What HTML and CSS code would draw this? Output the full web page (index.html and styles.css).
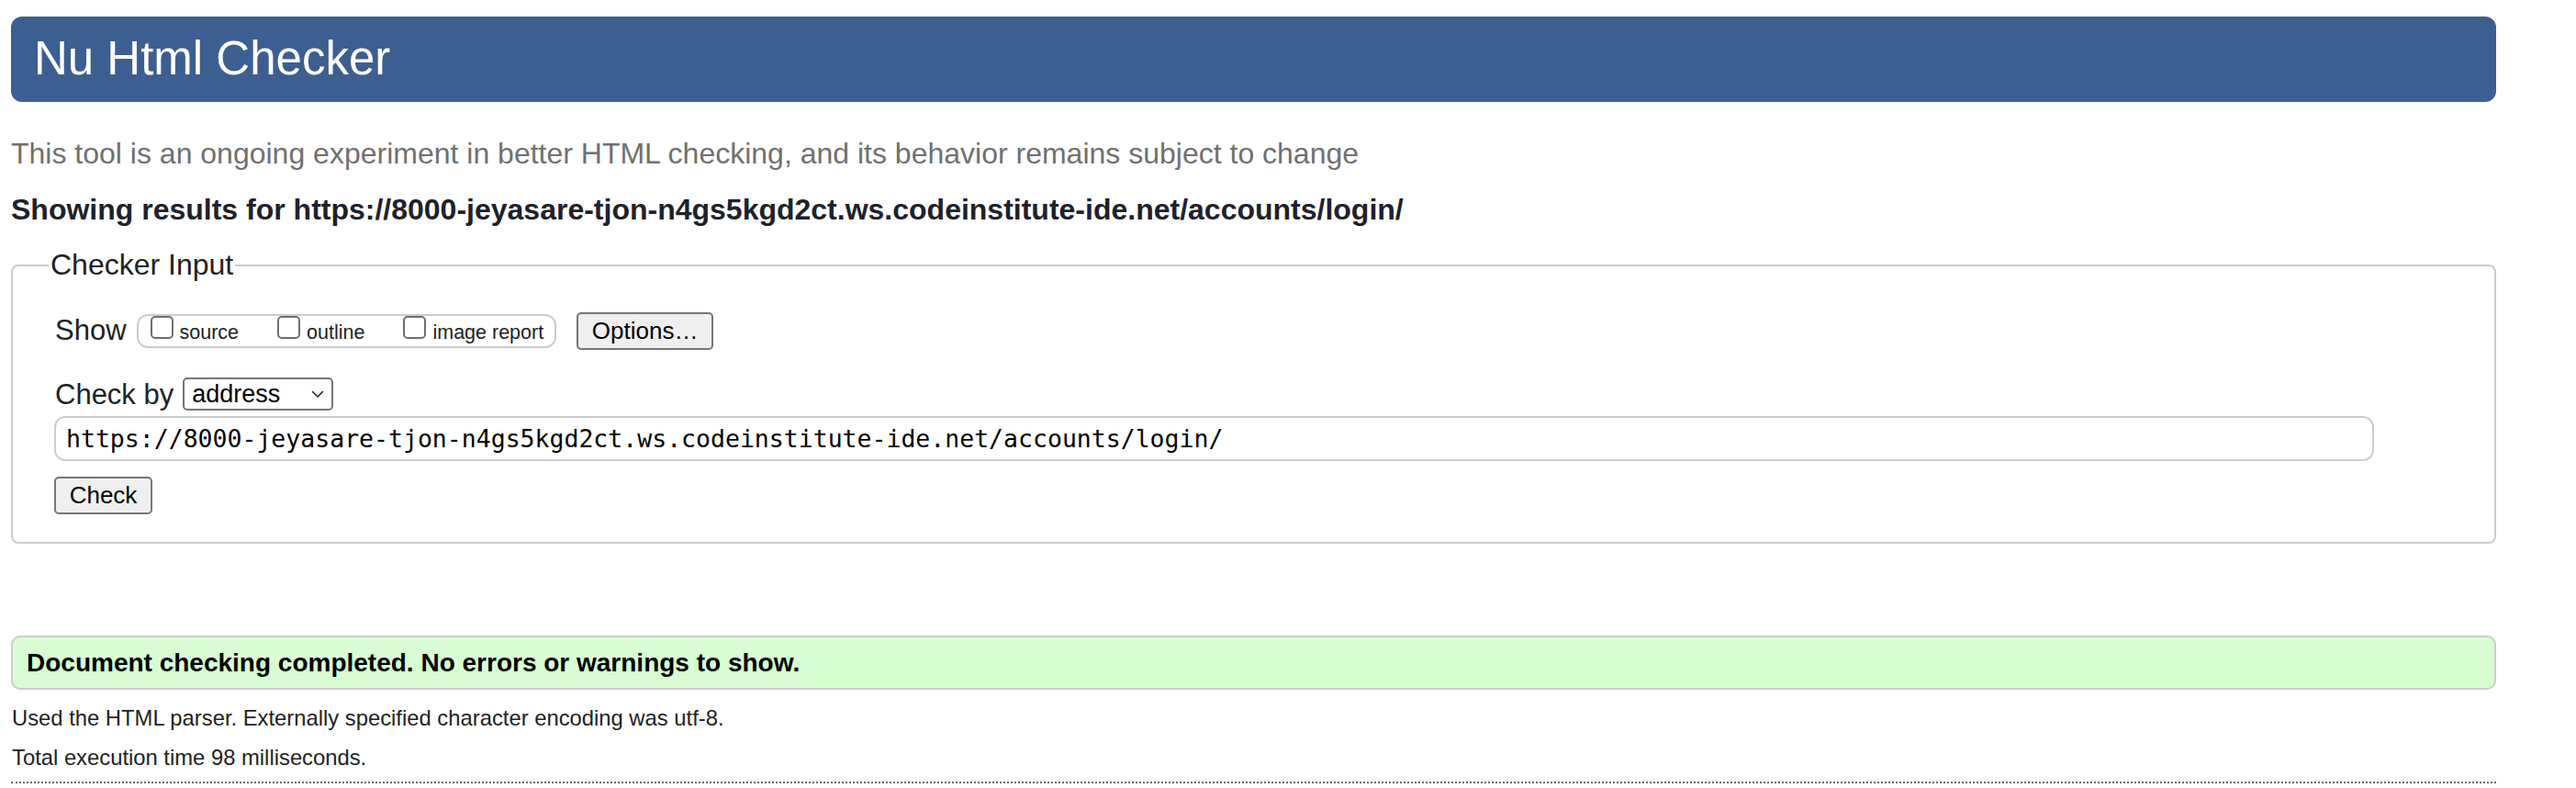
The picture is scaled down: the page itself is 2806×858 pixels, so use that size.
FILE: index.html
```html
<!DOCTYPE html>
<html lang="en">
<head>
<meta charset="utf-8">
<title>Nu Html Checker</title>
<link rel="stylesheet" href="styles.css">
</head>
<body>
<div class="page">
  <header class="banner"><h1 class="banner-title">Nu Html Checker</h1></header>
  <p class="lede">This tool is an ongoing experiment in better HTML checking, and its behavior remains subject to change</p>
  <p class="results-for">Showing results for https://8000-jeyasare-tjon-n4gs5kgd2ct.ws.codeinstitute-ide.net/accounts/login/</p>
  <form class="checker-form">
    <fieldset class="checker">
      <legend class="checker-legend">Checker Input</legend>
      <div class="rows">
        <div class="row row-show">
          <span class="row-label">Show</span>
          <span class="opts">
            <input type="checkbox" class="cb" id="cb-source"><label class="opt-label" for="cb-source">source</label>
            <input type="checkbox" class="cb" id="cb-outline"><label class="opt-label" for="cb-outline">outline</label>
            <input type="checkbox" class="cb" id="cb-image"><label class="opt-label opt-last" for="cb-image">image report</label>
          </span>
          <button type="button" class="btn btn-options">Options…</button>
        </div>
        <div class="row row-by">
          <label class="row-label" for="docselect">Check by</label>
          <span class="select-wrap">
            <select id="docselect" class="doc-select"><option>address</option><option>file upload</option><option>text input</option></select>
            <svg class="chevron" width="14" height="9" viewBox="0 0 14 9" aria-hidden="true"><path d="M1.5 1.5 L7 7 L12.5 1.5" fill="none" stroke="#222" stroke-width="1.6" stroke-linecap="round" stroke-linejoin="round"/></svg>
          </span>
        </div>
        <div class="row row-url">
          <input type="url" class="url" value="https://8000-jeyasare-tjon-n4gs5kgd2ct.ws.codeinstitute-ide.net/accounts/login/">
        </div>
        <div class="row row-submit">
          <button type="button" class="btn btn-check">Check</button>
        </div>
      </div>
    </fieldset>
  </form>
  <div class="success">Document checking completed. No errors or warnings to show.</div>
  <p class="meta meta-first">Used the HTML parser. Externally specified character encoding was utf-8.</p>
  <p class="meta meta-second">Total execution time 98 milliseconds.</p>
  <hr class="dots">
</div>
</body>
</html>
```
FILE: styles.css
```css
html, body {
  margin: 0;
  padding: 0;
  background: #ffffff;
}

body {
  font-family: "Liberation Sans", Arial, Helvetica, sans-serif;
  color: #222222;
}

.page {
  margin: 0 87px 0 12px;
  padding-top: 18px;
}

.banner {
  height: 93px;
  background: #3d5e91;
  border-radius: 12px;
  display: flex;
  align-items: center;
  padding: 0 25px 2px;
  box-sizing: border-box;
}

.banner-title {
  margin: 0;
  font-size: 51px;
  line-height: 52px;
  font-weight: normal;
  color: #ffffff;
}

.lede {
  margin: 40px 0 0;
  font-size: 32px;
  line-height: 32px;
  color: #707070;
}

.results-for {
  margin: 30px 0 0;
  font-size: 32px;
  line-height: 30px;
  font-weight: bold;
  color: #20212a;
}

.checker-form {
  margin: 30px 0 0;
}

.checker {
  margin: 0;
  border: 2px solid #cccccc;
  border-radius: 8px;
  padding: 36px 0 30px 39px;
}

.checker-legend {
  padding: 0 2px;
  font-size: 32px;
  line-height: 31px;
  color: #222222;
}

.rows {
  padding-left: 6px;
  display: flex;
  flex-direction: column;
  align-items: flex-start;
}

.row {
  display: flex;
  align-items: center;
}

.row-label {
  font-size: 31px;
  line-height: 31px;
  color: #222222;
}

.row-show {
  height: 41px;
}

.row-show .row-label {
  margin-right: 11px;
  margin-left: 1px;
  position: relative;
  top: -1px;
}

.opts {
  display: flex;
  align-items: flex-start;
  height: 37px;
  box-sizing: border-box;
  border: 2px solid #cccccc;
  border-radius: 12px;
  padding: 0 12px 0 13px;
}

.cb {
  appearance: none;
  -webkit-appearance: none;
  margin: 0 7px 0 0;
  width: 25px;
  height: 25px;
  box-sizing: border-box;
  border: 2px solid #6f6f6f;
  border-radius: 5px;
  background: #ffffff;
}

.opt-label {
  font-size: 21.5px;
  line-height: 21.5px;
  margin-top: 8px;
  margin-right: 42px;
  color: #222222;
}

.opt-label.opt-last {
  margin-right: 0;
}

.btn {
  font-family: "Liberation Sans", Arial, Helvetica, sans-serif;
  font-size: 26px;
  color: #000000;
  background: #efefef;
  border: 2px solid #767676;
  border-radius: 5px;
  height: 41px;
  box-sizing: border-box;
  padding: 0;
  margin: 0;
}

.btn-options {
  width: 149px;
  margin-left: 22px;
}

.row-by {
  margin-top: 30px;
  height: 36px;
}

.row-by .row-label {
  margin-left: 1px;
  margin-right: 10px;
  position: relative;
  top: 0;
}

.select-wrap {
  position: relative;
  display: block;
}

.doc-select {
  appearance: none;
  -webkit-appearance: none;
  width: 164px;
  height: 36px;
  box-sizing: border-box;
  border: 2px solid #767676;
  border-radius: 5px;
  background: #ffffff;
  padding: 0 0 0 8px;
  margin: 0;
  font-family: "Liberation Sans", Arial, Helvetica, sans-serif;
  font-size: 27px;
  color: #000000;
}

.chevron {
  position: absolute;
  right: 10px;
  top: 14px;
  pointer-events: none;
}

.row-url {
  margin-top: 6px;
}

.url {
  width: 2527px;
  height: 49px;
  box-sizing: border-box;
  border: 2px solid #cccccc;
  border-radius: 12px;
  padding: 0 0 0 11px;
  margin: 0;
  font-family: "DejaVu Sans Mono", "Liberation Mono", monospace;
  font-size: 26.5px;
  color: #000000;
  background: #ffffff;
}

.row-submit {
  margin-top: 17px;
}

.btn-check {
  width: 107px;
}

.success {
  margin-top: 100px;
  height: 59px;
  box-sizing: border-box;
  border: 2px solid #cccccc;
  border-radius: 10px;
  background: #d8fdd2;
  padding: 0 0 0 15px;
  display: flex;
  align-items: center;
  font-size: 28px;
  line-height: 28px;
  font-weight: bold;
  color: #000000;
}

.meta {
  font-size: 23.8px;
  line-height: 25px;
  color: #222222;
  margin: 0;
  padding-left: 1px;
}

.meta-first {
  margin-top: 18px;
}

.meta-second {
  margin-top: 18px;
}

.dots {
  margin: 14px 0 0;
  border: 0;
  border-top: 2px dotted #6a6a6a;
  height: 0;
}
```
